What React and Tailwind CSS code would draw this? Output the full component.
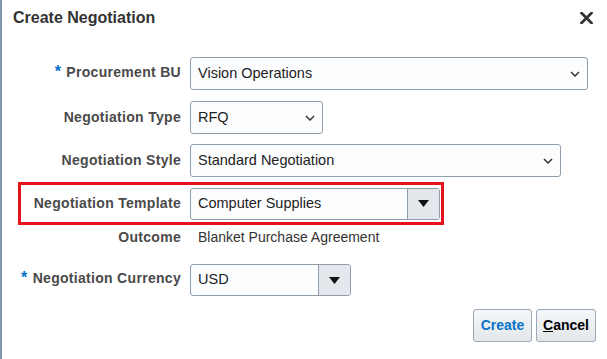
import { useState } from "react";

const Chevron = () => (
  <svg width="10" height="6" viewBox="0 0 10 6" className="shrink-0">
    <path d="M1 1 L5 5 L9 1" fill="none" stroke="#333" strokeWidth="1.5" />
  </svg>
);

const SelectBox = ({ value, width }) => (
  <div
    className={`flex items-center justify-between h-[33px] pl-[7px] pr-[7px] border border-[#909eab] rounded-[3px] bg-[#fcfdfe] text-[14.5px] text-[#222] ${width}`}
  >
    <span>{value}</span>
    <Chevron />
  </div>
);

const ComboBox = ({ value, width }) => (
  <div
    className={`flex h-[32px] border border-[#909eab] rounded-[3px] bg-[#fcfdfe] overflow-hidden ${width}`}
  >
    <div className="flex-1 flex items-center pl-[7px] text-[14.5px] text-[#222]">
      {value}
    </div>
    <div className="w-[32px] flex items-center justify-center border-l border-[#909eab] bg-[#e4e8ec]">
      <svg width="11" height="7" viewBox="0 0 11 7">
        <path d="M0 0 L11 0 L5.5 7 Z" fill="#111" />
      </svg>
    </div>
  </div>
);

const Label = ({ children, required, width = "w-[179px]" }) => (
  <div
    className={`shrink-0 text-right text-[14px] tracking-[0.3px] font-bold text-[#4a4a4a] ${width}`}
  >
    {required && (
      <span className="text-[#0572ce] text-[16px] align-top relative top-[-2px] mr-[5px]">
        *
      </span>
    )}
    {children}
  </div>
);

export default function App() {
  const [template] = useState("Computer Supplies");

  return (
    <div className="w-[607px] h-[359px] bg-white border-l-2 border-[#8196ab] font-['Liberation_Sans',Arial,sans-serif] overflow-hidden">
      <div className="flex items-center justify-between h-[36px] pl-[11px] pr-[14px]">
        <h1 className="text-[16px] font-bold text-[#333]">Create Negotiation</h1>
        <svg width="13" height="12" viewBox="0 0 13 12">
          <path
            d="M1.5 1 L11.5 11 M11.5 1 L1.5 11"
            stroke="#333"
            strokeWidth="2.8"
            strokeLinecap="round"
          />
        </svg>
      </div>

      <div className="flex flex-col">
        <div className="flex items-center gap-[9px] mt-[21px]">
          <Label required>Procurement BU</Label>
          <SelectBox value="Vision Operations" width="w-[398px]" />
        </div>

        <div className="flex items-center gap-[9px] mt-[11px]">
          <Label>Negotiation Type</Label>
          <SelectBox value="RFQ" width="w-[133px]" />
        </div>

        <div className="flex items-center gap-[9px] mt-[10px]">
          <Label>Negotiation Style</Label>
          <SelectBox value="Standard Negotiation" width="w-[371px]" />
        </div>

        <div className="flex items-center gap-[9px] mt-[5px] ml-[16px] w-[426px] h-[43px] border-[3px] border-[#e3121d]">
          <Label width="w-[160px]">Negotiation Template</Label>
          <ComboBox value={template} width="w-[250px]" />
        </div>

        <div className="flex items-center gap-[17px] h-[24px]">
          <Label>Outcome</Label>
          <span className="text-[14px] text-[#333]">Blanket Purchase Agreement</span>
        </div>

        <div className="flex items-center gap-[9px] mt-[15px]">
          <Label required>Negotiation Currency</Label>
          <ComboBox value="USD" width="w-[161px]" />
        </div>

        <div className="flex justify-end gap-[4px] mt-[13px] pr-[11px]">
          <button className="w-[59px] h-[33px] rounded-[3px] border border-[#9ba9b6] bg-gradient-to-b from-[#f5f7f8] to-[#e3e7eb] text-[14px] font-bold text-[#0a72c9]">
            Create
          </button>
          <button className="w-[60px] h-[33px] rounded-[3px] border border-[#9ba9b6] bg-gradient-to-b from-[#f5f7f8] to-[#e3e7eb] text-[14px] font-bold text-black">
            <span className="underline">C</span>ancel
          </button>
        </div>
      </div>
    </div>
  );
}
